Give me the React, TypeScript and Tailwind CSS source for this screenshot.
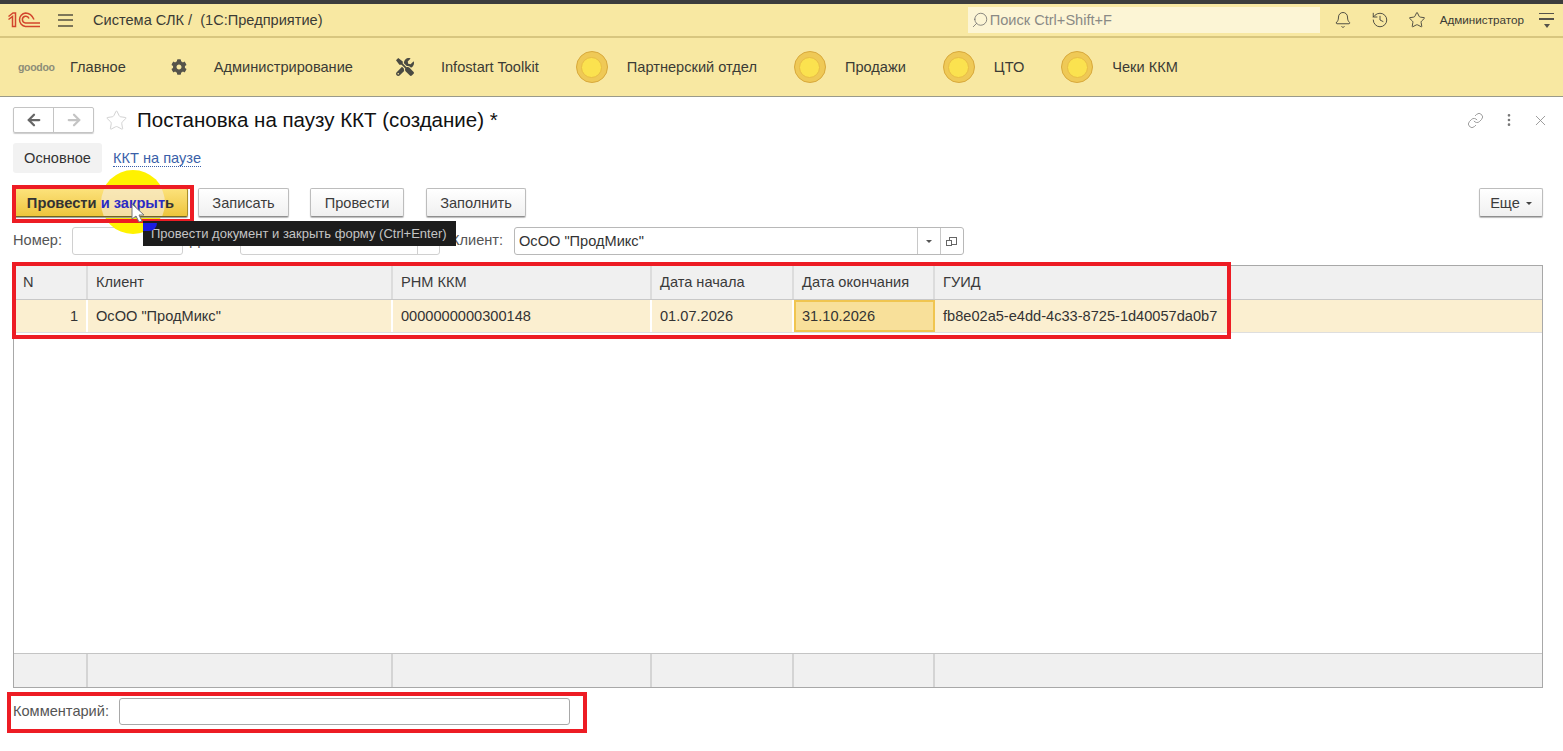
import { ArrowLeft, ArrowRight, Bell, History, Link, MoreVertical, Search, Star, X } from "lucide-react";
import { FaCog, FaTools } from "react-icons/fa";

const sections = ["Партнерский отдел", "Продажи", "ЦТО", "Чеки ККМ"];
const cols = "grid grid-cols-[74px_305px_259px_142px_141px_1fr]";

function Logo1C() {
  return (
    <svg width="32" height="16" viewBox="0 0 32 16" fill="none" stroke="#d2452d" strokeWidth="1.5">
      <path d="M0.500 4.500L5 1H7.500V14.500H4.500V4.500L0.500 7.500" />
      <path d="M26 7.500C24 3 21 1 17.500 1A6.800 6.800 0 0 0 17.500 14.500H32" />
      <path d="M32 11H17.500A3.400 3.400 0 1 1 21 6.500" />
    </svg>
  );
}

function Coin() {
  return (
    <div className="flex h-[32px] w-[32px] items-center justify-center rounded-full border border-[#d8a93c] bg-[#efc956]">
      <div className="h-[21px] w-[21px] rounded-full border border-[#e8bd45] bg-[#fbe24f]" />
    </div>
  );
}

function ActionButton({ label, width, caret }: { label: string; width: string; caret?: boolean }) {
  return (
    <button
      type="button"
      className={`flex h-[29px] items-center justify-center gap-[6px] rounded-[2px] border border-[#bdbdbd] border-b-[#8f8f8f] bg-gradient-to-b from-white to-[#f0f0f0] pt-[2px] text-[14.6px] text-[#3c3c3c] shadow-[0_1px_1px_#bbb] ${width}`}
    >
      {label}
      {caret && <span className="h-0 w-0 border-x-[3px] border-t-[3px] border-x-transparent border-t-[#444]" />}
    </button>
  );
}

function TableFooter() {
  return (
    <div className={`${cols} h-[34px] border-t border-[#c4c4c4] bg-[#f0f0f0]`}>
      {[0, 1, 2, 3, 4].map((i) => (
        <div key={i} className="border-r-2 border-r-[#d4d4d4]" />
      ))}
      <div />
    </div>
  );
}

export default function App() {
  const headers = ["N", "Клиент", "РНМ ККМ", "Дата начала", "Дата окончания", "ГУИД"];

  return (
    <div className="relative flex h-[751px] w-full flex-col overflow-hidden bg-white font-['Liberation_Sans',Arial,sans-serif] text-[14.6px] text-[#333]">
      <div className="h-[4px] shrink-0 bg-[#3d3d3d]" />

      {/* top bar */}
      <header className="flex h-[34px] shrink-0 items-center border-b-2 border-[#d8c67f] bg-[#f8e8a2]">
        <div className="ml-[8px] w-[32px]">
          <Logo1C />
        </div>
        <div className="ml-[18px] flex h-[13px] w-[15px] flex-col justify-between">
          <span className="h-[2px] bg-[#7d7658]" />
          <span className="h-[2px] bg-[#7d7658]" />
          <span className="h-[2px] bg-[#7d7658]" />
        </div>
        <span className="ml-[20px] pt-[2px] text-[#3b3b35]">Система СЛК /&nbsp; (1С:Предприятие)</span>
        <div className="ml-auto flex h-[26px] w-[352px] items-center gap-[1px] bg-[#fcf5d5] pl-[3px] text-[#8a8a85]">
          <Search size={18} strokeWidth={1} className="-scale-x-100 text-[#666]" />
          <span className="pt-[2px]">Поиск Ctrl+Shift+F</span>
        </div>
        <div className="ml-[14px] flex items-center text-[#3f3f3a]">
          <Bell size={18} strokeWidth={1.2} />
          <History size={18} strokeWidth={1.2} className="ml-[19px]" />
          <Star size={18} strokeWidth={1.2} className="ml-[19px]" />
        </div>
        <span className="ml-[14px] text-[11.700px] text-[#3b3b35]">Администратор</span>
        <div className="ml-[15px] mr-[9px] flex w-[15px] flex-col items-center gap-[4px]">
          <span className="h-[1.500px] w-full bg-[#55524a]" />
          <span className="h-[1.500px] w-full bg-[#55524a]" />
          <span className="h-0 w-0 border-x-[3px] border-t-[4px] border-x-transparent border-t-[#55524a]" />
        </div>
      </header>

      {/* sections */}
      <nav className="flex h-[59px] shrink-0 items-center border-b border-[#9a9a8a] bg-[#f8e8a2] text-[#3b3b35]">
        <span className="ml-[18px] w-[34px] text-[10.500px] font-bold leading-none tracking-[-0.3px] text-[#8d8d78]">goodoo</span>
        <span className="ml-[18px] pt-[2px]">Главное</span>
        <FaCog size={16} className="ml-[45px] text-[#55534a]" />
        <span className="ml-[27px] pt-[2px]">Администрирование</span>
        <FaTools size={18} className="ml-[43px] text-[#4a4a42]" />
        <span className="ml-[27px] pt-[2px]">Infostart Toolkit</span>
        <div className="ml-[37px] flex items-center">
          {sections.map((s) => (
            <div key={s} className="mr-[37px] flex items-center gap-[19px]">
              <Coin />
              <span className="pt-[2px]">{s}</span>
            </div>
          ))}
        </div>
      </nav>

      {/* form */}
      <main className="flex min-h-0 flex-1 flex-col pl-[13px] pr-[20px]">
        <div className="mt-[10px] flex h-[26px] items-center">
          <div className="flex h-[26px] w-[81px] rounded-[2px] border border-[#c4c4c4] shadow-[0_1px_1px_#ccc]">
            <div className="flex w-[40px] items-center justify-center border-r border-[#c4c4c4] text-[#666]">
              <ArrowLeft size={18} strokeWidth={3} />
            </div>
            <div className="flex flex-1 items-center justify-center text-[#c4c4c4]">
              <ArrowRight size={18} strokeWidth={3} />
            </div>
          </div>
          <Star size={23} strokeWidth={1} className="ml-[11px] text-[#d0d0d0]" />
          <h1 className="ml-[9px] text-[20.500px] font-normal text-[#111]">Постановка на паузу ККТ (создание) *</h1>
          <div className="-mr-[6px] ml-auto flex items-center text-[#8c8c8c]">
            <Link size={17} strokeWidth={1.2} />
            <MoreVertical size={16} strokeWidth={2} className="ml-[17px] text-[#777]" />
            <X size={17} strokeWidth={1.2} className="ml-[15px]" />
          </div>
        </div>

        <div className="mt-[10px] flex h-[30px] items-center">
          <div className="flex h-[30px] w-[89px] items-center justify-center rounded-[3px] bg-[#f2f2f2] pt-[2px] text-[#333]">Основное</div>
          <span className="ml-[11px] border-b border-dotted border-[#3a5fa8] leading-[16px] text-[#3a5fa8]">ККТ на паузе</span>
        </div>

        <div className="relative mt-[15px] flex h-[29px] items-center">
          <button
            type="button"
            className="relative z-10 h-[29px] w-[175px] overflow-hidden rounded-[2px] border border-[#a98f2a] border-b-[#6f6420] bg-gradient-to-b from-[#fce27a] to-[#eec53a] pt-[1px] text-[14.7px] font-bold text-[#333] shadow-[0_1px_1px_#999]"
          >
            <span className="absolute left-[87px] top-[-18px] h-[64px] w-[64px] rounded-full bg-[#f7ead0]/70" />
            <span className="relative">
              Провести <span className="text-[#2b2bc4]">и закрыт</span>ь
            </span>
          </button>
          <ActionButton label="Записать" width="ml-[10px] w-[91px]" />
          <ActionButton label="Провести" width="ml-[21px] w-[94px]" />
          <ActionButton label="Заполнить" width="ml-[22px] w-[100px]" />
          <ActionButton label="Еще" caret width="ml-auto w-[64px]" />
        </div>

        <div className="mt-[10px] flex h-[28px] items-center">
          <span className="w-[59px] text-[#555]">Номер:</span>
          <div className="h-[28px] w-[111px] rounded-[3px] border border-[#d0d0d0]" />
          <span className="ml-[7px] w-[50px] text-[#555]">Д</span>
          <div className="flex h-[28px] w-[200px] justify-end rounded-[3px] border border-[#d0d0d0]">
            <div className="w-[22px] border-l border-[#d0d0d0]" />
          </div>
          <span className="ml-[11px] w-[63px] text-[#555]">Клиент:</span>
          <div className="flex h-[28px] w-[450px] items-center rounded-[3px] border border-[#b8b8b8] text-[#333]">
            <span className="flex-1 pl-[4px] pt-[2px]">ОсОО "ПродМикс"</span>
            <div className="flex h-full w-[23px] items-center justify-center border-l border-[#c8c8c8]">
              <span className="h-0 w-0 border-x-[3px] border-t-[3px] border-x-transparent border-t-[#555]" />
            </div>
            <div className="flex h-full w-[23px] items-center justify-center border-l border-[#c8c8c8]">
              <span className="relative ml-[2px] h-[8px] w-[8px] border border-[#666]">
                <span className="absolute left-[-4px] top-[2px] h-[6px] w-[6px] border border-[#666] bg-white" />
              </span>
            </div>
          </div>
        </div>

        {/* table */}
        <div className="mt-[10px] flex h-[423px] flex-col border border-[#a8a8a8]">
          <div className={`${cols} h-[34px] border-b border-[#c8c8c8] bg-[#f0f0f0] text-[#3a3a3a]`}>
            {headers.map((h, i) => (
              <div key={h} className={`flex items-center ${i === 0 ? "pl-[9px]" : "pl-[8px]"} ${i < 5 ? "border-r-2 border-r-[#dcdcdc]" : ""}`}>
                {h}
              </div>
            ))}
          </div>
          <div className={`${cols} h-[33px] border-b border-[#dedede] bg-[#fbefd0] text-[#333]`}>
            <div className="flex items-center justify-end border-r-2 border-r-white pr-[8px] pt-[2px]">1</div>
            <div className="flex items-center border-r-2 border-r-white pl-[8px] pt-[2px]">ОсОО "ПродМикс"</div>
            <div className="flex items-center border-r-2 border-r-white pl-[8px] pt-[2px]">0000000000300148</div>
            <div className="flex items-center border-r-2 border-r-white pl-[8px] pt-[2px]">01.07.2026</div>
            <div className="flex items-center border-2 border-[#f0c550] bg-[#f8e09a] pl-[6px] pt-[2px]">31.10.2026</div>
            <div className="flex items-center pl-[8px] pt-[2px]">fb8e02a5-e4dd-4c33-8725-1d40057da0b7</div>
          </div>
          <div className="flex-1" />
          <TableFooter />
        </div>

        <div className="mt-[10px] flex h-[27px] items-center">
          <span className="w-[106px] text-[#555]">Комментарий:</span>
          <div className="h-[27px] w-[451px] rounded-[3px] border border-[#a8a8a8]" />
        </div>
      </main>

      {/* click highlight and annotations, over the form */}
      <div className="absolute left-[101px] top-[170px] h-[64px] w-[64px] rounded-full bg-[#fff200]" />
      <div className="absolute left-[12px] top-[185px] z-20 h-[38px] w-[182px] border-[4px] border-[#ed1c24]" />
      <div className="absolute left-[12px] top-[262px] z-20 h-[77px] w-[1219px] border-[4px] border-[#ed1c24]" />
      <div className="absolute left-[7px] top-[692px] z-20 h-[41px] w-[580px] border-[4px] border-[#ed1c24]" />
      <svg className="absolute left-[131px] top-[203px] z-30" width="17" height="20" viewBox="0 0 17 20">
        <path d="M1 1v15l4-3 3 6 3-1-3-6h5z" fill="#fff" stroke="#777" strokeWidth="1" />
      </svg>
      <div className="absolute left-[143px] top-[221px] z-30 flex h-[25px] w-[313px] items-center bg-[#1c1c1c] pl-[8px] text-[13px] text-[#c4c4c4]">
        Провести документ и закрыть форму (Ctrl+Enter)
      </div>
      <div className="absolute left-[143px] top-[223px] z-30 h-[8px] w-[14px] rounded-br-[12px] bg-[#1c1ce0]" />
    </div>
  );
}
